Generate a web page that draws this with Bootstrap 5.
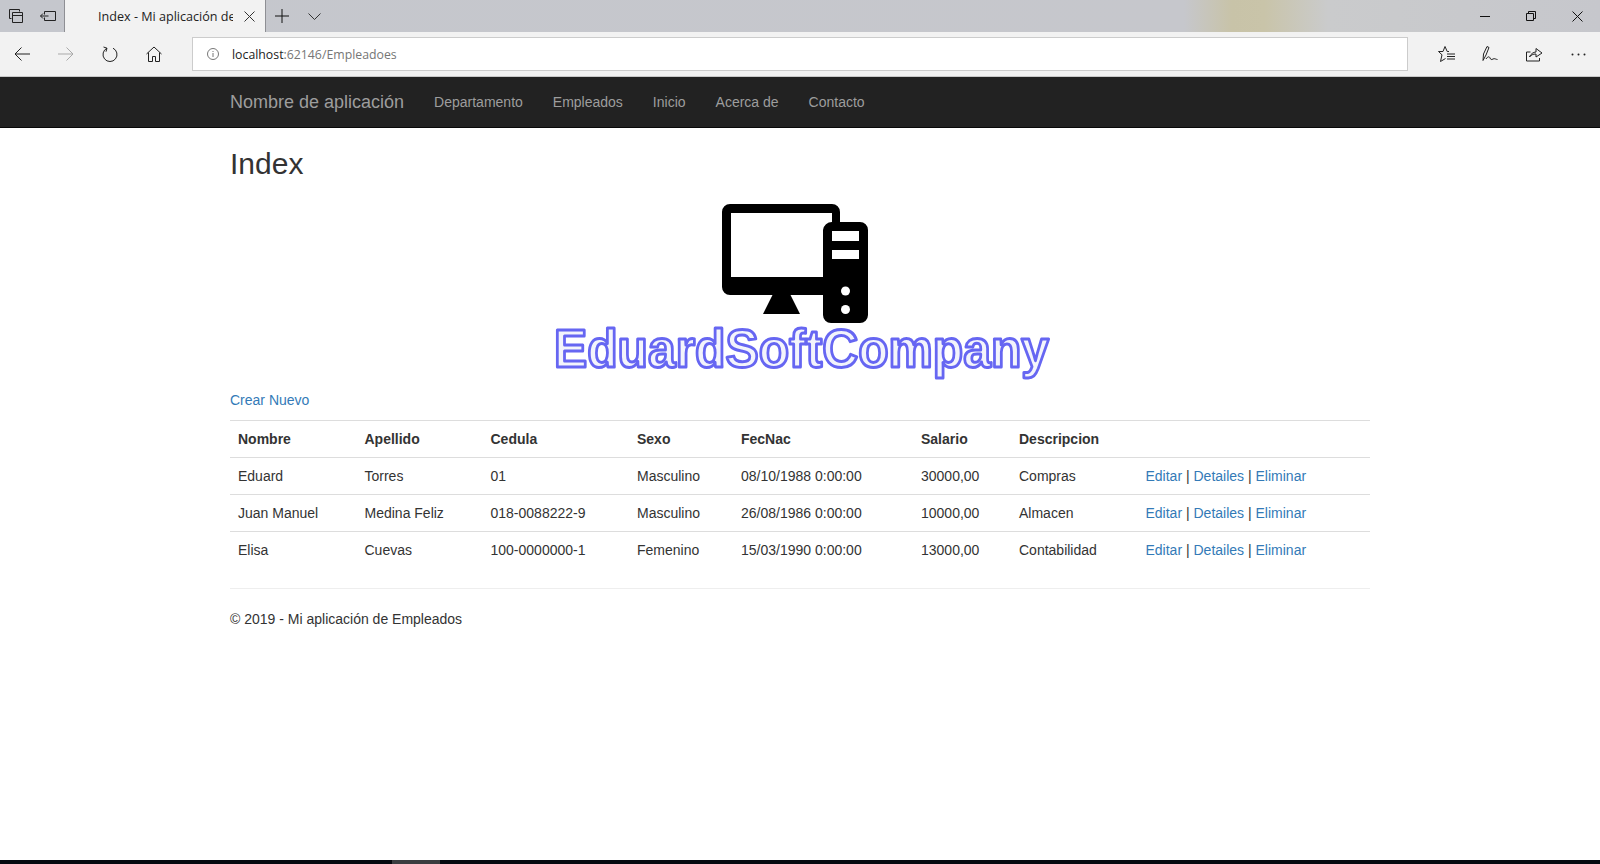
<!DOCTYPE html>
<html lang="es">
<head>
  <meta charset="UTF-8">
  <title>Index - Mi aplicación de Empleados</title>
  <meta name="viewport" content="width=device-width, initial-scale=1">
  <link href="https://cdn.jsdelivr.net/npm/bootstrap@5.3.2/dist/css/bootstrap.min.css" rel="stylesheet">
  <style>
    html, body { height: 100%; }
    body { font-family: "Liberation Sans", Arial, sans-serif; font-size: 14px; line-height: 20px; color: #333; overflow: hidden; }
    a { color: #337ab7; text-decoration: none; }
    svg { display: block; }

    .edge-strip { height: 32px; background: linear-gradient(90deg, #c5c7cd 0%, #c6c7cc 74%, #c8c3a8 77%, #c9c4a9 79%, #cacbcc 83%, #c6c7cc 100%); }
    .strip-btn { width: 32px; height: 32px; color: #222; }
    .win-btn { width: 46px; height: 32px; color: #111; }
    .edge-tab { width: 202px; height: 32px; background: #f2f2f2; border-left: 1px solid #8e8f94; border-right: 1px solid #8e8f94; padding-left: 33px; padding-right: 10px; font-family: "Open Sans", "Noto Sans", sans-serif; font-size: 12.6px; color: #222; }
    .edge-tab-title { width: 135px; padding-top: 1px; white-space: nowrap; overflow: hidden; }
    .edge-bar { height: 45px; background: #f2f2f2; border-bottom: 1px solid #c9c9c9; }
    .bar-btn { width: 44px; height: 44px; color: #222; }
    .bar-btn-off { color: #a9a9a9; }
    .edge-address { height: 34px; margin-left: 16px; margin-right: 16px; background: #fff; border: 1px solid #ccc; padding-left: 14px; font-family: "Open Sans", "Noto Sans", sans-serif; font-size: 12.3px; color: #767676; }
    .edge-host { color: #222; }
    .edge-url { margin-left: 5px; padding-top: 1px; }

    .app-nav { height: 51px; background: #222; border-bottom: 1px solid #080808; }
    .app-wrap { width: 1170px; padding: 0 15px; margin: 0 auto; }
    .app-brand { font-size: 18px; color: #9d9d9d; margin-right: 15px; }
    .app-link { color: #9d9d9d; padding: 0 15px; }

    .page-title { font-family: inherit; font-size: 30px; line-height: 33px; font-weight: 500; color: #333; margin: 19px 0 11px; }
    .logo-art { width: 600px; height: 199px; margin: 0 auto; }
    .logo-word { font-family: "Liberation Sans", Arial, sans-serif; font-weight: 700; font-size: 54px; fill: #f3f4fb; stroke: #6666f2; stroke-width: 3px; stroke-linejoin: round; }
    .new-line { margin-bottom: 10px; }

    .emp-table.table { margin-bottom: 20px; table-layout: fixed; color: #333; }
    .emp-table.table > :not(caption) > * > * { padding: 8px; border-width: 1px 0 0; border-color: #ddd; color: #333; box-shadow: none; }
    .emp-table th:nth-child(1) { width: 126.5px; }
    .emp-table th:nth-child(2) { width: 126px; }
    .emp-table th:nth-child(3) { width: 146.500px; }
    .emp-table th:nth-child(4) { width: 104px; }
    .emp-table th:nth-child(5) { width: 180px; }
    .emp-table th:nth-child(6) { width: 98px; }
    .emp-table th:nth-child(7) { width: 126.5px; }

    .foot-rule { margin: 20px 0; border: 0; border-top: 1px solid #eee; opacity: 1; }
    .task-strip { height: 4px; background: #05090f; }
    .task-on { width: 48px; margin-left: 392px; height: 4px; background: #3a3d40; }
  </style>
</head>
<body class="d-flex flex-column">

  <div class="edge-strip d-flex align-items-center flex-shrink-0">
    <div class="strip-btn d-flex align-items-center justify-content-center">
      <svg width="16" height="16" viewBox="0 0 16 16" fill="none" stroke="currentColor"><path d="M1.5 1.5h10v2M1.5 1.5v9h2M4.500 4.500h10v10h-10zM4.500 7.500h10"/></svg>
    </div>
    <div class="strip-btn d-flex align-items-center justify-content-center">
      <svg width="16" height="16" viewBox="0 0 16 16" fill="none" stroke="currentColor"><path d="M4.500 3.500h11v9h-11v-3M4.500 6.500v-3M.5 8h8M3 5.500 .5 8 3 10.500"/></svg>
    </div>
    <div class="edge-tab d-flex align-items-center justify-content-between">
      <span class="edge-tab-title">Index - Mi aplicación de Empleados</span>
      <svg width="11" height="11" viewBox="0 0 11 11" fill="none" stroke="#333"><path d="M.5.5l10 10M10.500.5l-10 10"/></svg>
    </div>
    <div class="strip-btn d-flex align-items-center justify-content-center">
      <svg width="14" height="14" viewBox="0 0 14 14" fill="none" stroke="#111"><path d="M7 0v14M0 7h14"/></svg>
    </div>
    <div class="strip-btn d-flex align-items-center justify-content-center">
      <svg width="13" height="7" viewBox="0 0 13 7" fill="none" stroke="#333"><path d="M.5.5l6 6 6-6"/></svg>
    </div>
    <div class="flex-grow-1"></div>
    <div class="win-btn d-flex align-items-center justify-content-center">
      <svg width="10" height="10" viewBox="0 0 10 10" fill="none" stroke="currentColor"><path d="M0 5.500h10"/></svg>
    </div>
    <div class="win-btn d-flex align-items-center justify-content-center">
      <svg width="10" height="10" viewBox="0 0 10 10" fill="none" stroke="currentColor"><path d="M.5 2.500h7v7h-7zM2.500 2.500v-2h7v7h-2"/></svg>
    </div>
    <div class="win-btn d-flex align-items-center justify-content-center">
      <svg width="11" height="11" viewBox="0 0 11 11" fill="none" stroke="currentColor"><path d="M.5.5l10 10M10.500.5l-10 10"/></svg>
    </div>
  </div>

  <div class="edge-bar d-flex align-items-center flex-shrink-0">
    <div class="bar-btn d-flex align-items-center justify-content-center">
      <svg width="16" height="14" viewBox="0 0 16 14" fill="none" stroke="currentColor"><path d="M16 7H1M7.500.5 1 7l6.500 6.500"/></svg>
    </div>
    <div class="bar-btn bar-btn-off d-flex align-items-center justify-content-center">
      <svg width="16" height="14" viewBox="0 0 16 14" fill="none" stroke="currentColor"><path d="M0 7h15M8.500.5 15 7l-6.500 6.500"/></svg>
    </div>
    <div class="bar-btn d-flex align-items-center justify-content-center">
      <svg width="16" height="16" viewBox="0 0 16 16" fill="none" stroke="currentColor"><path d="M5 2.200A7 7 0 1 0 11 2.200M1.500 1 5 2.200 4 5.700"/></svg>
    </div>
    <div class="bar-btn d-flex align-items-center justify-content-center">
      <svg width="16" height="16" viewBox="0 0 16 16" fill="none" stroke="currentColor"><path d="M.5 8 8 1l7.500 7M2.500 6.500v9h4v-5h3v5h4v-9"/></svg>
    </div>
    <div class="edge-address flex-grow-1 d-flex align-items-center gap-2">
      <svg width="12" height="12" viewBox="0 0 12 12" fill="none" stroke="#777"><circle cx="6" cy="6" r="5.500"/><path d="M6 5v4M6 3v1"/></svg>
      <span class="edge-url"><span class="edge-host">localhost</span>:62146/Empleadoes</span>
    </div>
    <div class="bar-btn d-flex align-items-center justify-content-center">
      <svg width="17" height="17" viewBox="0 0 17 17" fill="none" stroke="currentColor"><path d="M11 5.500H9.200L7 .5 5 5.500H.5L4 8.800 2.500 15.500l5-3M9 8h8M9 10.500h8M9 13h8"/></svg>
    </div>
    <div class="bar-btn d-flex align-items-center justify-content-center">
      <svg width="16" height="18" viewBox="0 0 16 18" fill="none" stroke="currentColor"><path d="M1 15.500 1.500 9 5 1.500 7 2.500 4 10zM4 14c2-3 3.500-2.500 4-1s1.500 2 3 1 3 .5 4.500.5"/></svg>
    </div>
    <div class="bar-btn d-flex align-items-center justify-content-center">
      <svg width="17" height="16" viewBox="0 0 17 16" fill="none" stroke="currentColor"><path d="M.5 6v9h13v-3M.5 6h4M3.500 11c1-3 4-5 6.500-5V2.500l6 4.500-6 4V8c-3 0-5 1-6.500 3z"/></svg>
    </div>
    <div class="bar-btn d-flex align-items-center justify-content-center">
      <svg width="15" height="3" viewBox="0 0 15 3" fill="currentColor"><circle cx="1.500" cy="1.500" r="1"/><circle cx="7.500" cy="1.500" r="1"/><circle cx="13.500" cy="1.500" r="1"/></svg>
    </div>
  </div>

  <nav class="app-nav flex-shrink-0">
    <div class="app-wrap h-100 d-flex align-items-center">
      <a class="app-brand" href="#">Nombre de aplicación</a>
      <a class="app-link" href="#">Departamento</a>
      <a class="app-link" href="#">Empleados</a>
      <a class="app-link" href="#">Inicio</a>
      <a class="app-link" href="#">Acerca de</a>
      <a class="app-link" href="#">Contacto</a>
    </div>
  </nav>

  <main class="flex-grow-1">
    <div class="app-wrap">
      <h2 class="page-title">Index</h2>

      <svg class="logo-art" viewBox="500 191 600 199" role="img" aria-label="EduardSoftCompany">
        <defs>
          <filter id="soft" x="-5%" y="-20%" width="110%" height="140%"><feGaussianBlur stdDeviation="0.6"/></filter>
        </defs>
        <path fill="#000" d="M730 204h102a8 8 0 0 1 8 8v10h20a8 8 0 0 1 8 8v85a8 8 0 0 1-8 8h-29a8 8 0 0 1-8-8v-20h-32.500l9.500 19h-37l9.500-19H730a8 8 0 0 1-8-8v-75a8 8 0 0 1 8-8z"/>
        <path fill="#fff" d="M731 213h101v9a9 9 0 0 0-9 8v47h-92zM832 231h27v10h-27zM832 250h27v9h-27z"/>
        <circle fill="#fff" cx="845.500" cy="291" r="4.500"/>
        <circle fill="#fff" cx="845.500" cy="309.500" r="4.500"/>
        <text class="logo-word" x="554" y="366.500" textLength="495" lengthAdjust="spacingAndGlyphs" filter="url(#soft)">EduardSoftCompany</text>
      </svg>

      <p class="new-line"><a href="#">Crear Nuevo</a></p>

      <table class="table emp-table">
        <thead>
          <tr>
            <th>Nombre</th>
            <th>Apellido</th>
            <th>Cedula</th>
            <th>Sexo</th>
            <th>FecNac</th>
            <th>Salario</th>
            <th>Descripcion</th>
            <th></th>
          </tr>
        </thead>
        <tbody>
          <tr>
            <td>Eduard</td><td>Torres</td><td>01</td><td>Masculino</td><td>08/10/1988 0:00:00</td><td>30000,00</td><td>Compras</td>
            <td><a href="#">Editar</a> | <a href="#">Detailes</a> | <a href="#">Eliminar</a></td>
          </tr>
          <tr>
            <td>Juan Manuel</td><td>Medina Feliz</td><td>018-0088222-9</td><td>Masculino</td><td>26/08/1986 0:00:00</td><td>10000,00</td><td>Almacen</td>
            <td><a href="#">Editar</a> | <a href="#">Detailes</a> | <a href="#">Eliminar</a></td>
          </tr>
          <tr>
            <td>Elisa</td><td>Cuevas</td><td>100-0000000-1</td><td>Femenino</td><td>15/03/1990 0:00:00</td><td>13000,00</td><td>Contabilidad</td>
            <td><a href="#">Editar</a> | <a href="#">Detailes</a> | <a href="#">Eliminar</a></td>
          </tr>
        </tbody>
      </table>

      <hr class="foot-rule">
      <footer>
        <p class="mb-0">© 2019 - Mi aplicación de Empleados</p>
      </footer>
    </div>
  </main>

  <div class="task-strip flex-shrink-0"><div class="task-on"></div></div>

</body>
</html>
